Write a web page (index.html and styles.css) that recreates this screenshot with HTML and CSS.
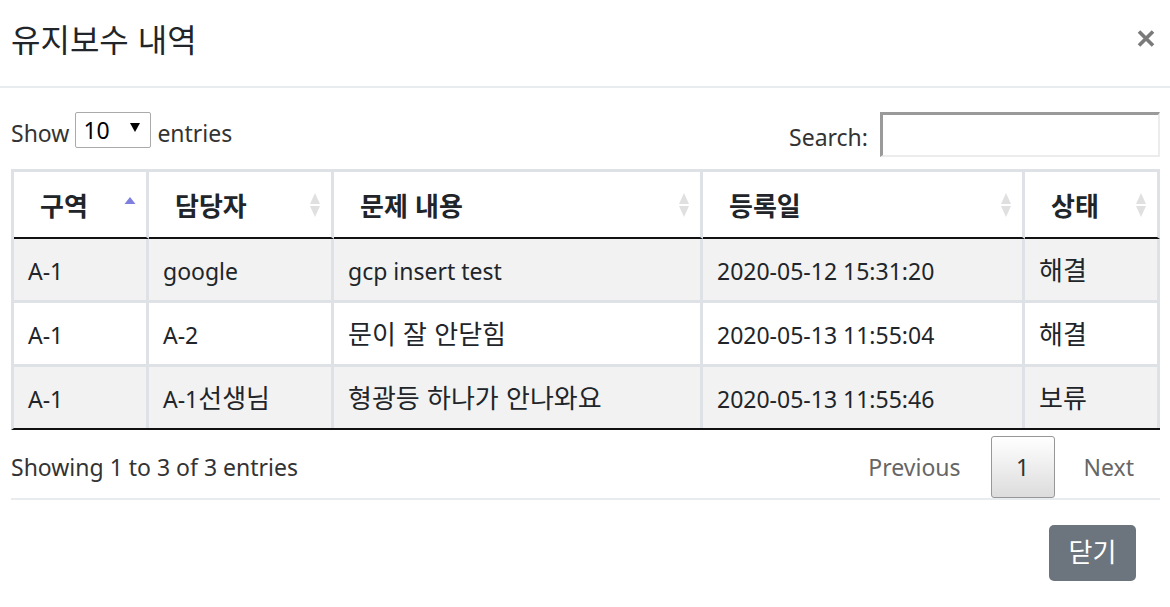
FILE: index.html
```html
<!DOCTYPE html>
<html lang="ko">
<head>
<meta charset="utf-8">
<title>유지보수 내역</title>
<link rel="stylesheet" href="styles.css">
</head>
<body>
<div class="modal">
  <div class="modal-header">
    <h4 class="modal-title">유지보수 내역</h4>
    <button class="close" type="button" aria-label="Close">
      <svg width="18" height="17" viewBox="0 0 18 17"><path d="M2 1.5 L16 15.5 M16 1.5 L2 15.5" stroke="#7a7a7a" stroke-width="3.6" stroke-linecap="butt"/></svg>
    </button>
  </div>
  <div class="modal-body">
    <div class="dt-top">
      <div class="dt-length"><span class="lbl">Show</span><span class="select"><span>10</span><svg width="10" height="9" viewBox="0 0 10 9"><path d="M0 0 H10 L5 9 Z" fill="#000"/></svg></span><span class="lbl">entries</span></div>
      <div class="dt-filter"><span class="lbl">Search:</span><span class="search-input"></span></div>
    </div>
    <table class="dt">
      <colgroup>
        <col class="c1"><col class="c2"><col class="c3"><col class="c4"><col class="c5">
      </colgroup>
      <thead>
        <tr>
          <th><div class="th-in"><span class="ko">구역</span><svg class="sort" width="12" height="24" viewBox="0 0 12 24"><path d="M0.5 11 L6 4 L11.5 11 Z" fill="#7f7fdf"/></svg></div></th>
          <th><div class="th-in"><span class="ko">담당자</span><svg class="sort" width="12" height="24" viewBox="0 0 12 24"><path d="M1 11 L6 0 L11 11 Z M1 13 L11 13 L6 24 Z" fill="#e0e0e0"/></svg></div></th>
          <th><div class="th-in"><span class="ko">문제 내용</span><svg class="sort" width="12" height="24" viewBox="0 0 12 24"><path d="M1 11 L6 0 L11 11 Z M1 13 L11 13 L6 24 Z" fill="#e0e0e0"/></svg></div></th>
          <th><div class="th-in"><span class="ko">등록일</span><svg class="sort" width="12" height="24" viewBox="0 0 12 24"><path d="M1 11 L6 0 L11 11 Z M1 13 L11 13 L6 24 Z" fill="#e0e0e0"/></svg></div></th>
          <th><div class="th-in"><span class="ko">상태</span><svg class="sort" width="12" height="24" viewBox="0 0 12 24"><path d="M1 11 L6 0 L11 11 Z M1 13 L11 13 L6 24 Z" fill="#e0e0e0"/></svg></div></th>
        </tr>
      </thead>
      <tbody>
        <tr class="odd"><td>A-1</td><td>google</td><td>gcp insert test</td><td>2020-05-12 15:31:20</td><td><span class="ko">해결</span></td></tr>
        <tr class="even"><td>A-1</td><td>A-2</td><td><span class="ko">문이 잘 안닫힘</span></td><td>2020-05-13 11:55:04</td><td><span class="ko">해결</span></td></tr>
        <tr class="odd last"><td>A-1</td><td>A-1<span class="ko">선생님</span></td><td><span class="ko">형광등 하나가 안나와요</span></td><td>2020-05-13 11:55:46</td><td><span class="ko">보류</span></td></tr>
      </tbody>
    </table>
    <div class="dt-bottom">
      <div class="dt-info">Showing 1 to 3 of 3 entries</div>
      <div class="dt-paginate">
        <span class="pg">Previous</span>
        <span class="pg current">1</span>
        <span class="pg">Next</span>
      </div>
    </div>
  </div>
  <div class="modal-footer">
    <button class="btn" type="button"><span class="ko">닫기</span></button>
  </div>
</div>
</body>
</html>
```
FILE: styles.css
```css
* { box-sizing: border-box; }
html, body {
  margin: 0;
  padding: 0;
  background: #fff;
}
body {
  font-family: "Noto Sans", "Noto Sans CJK KR", sans-serif;
  font-size: 23px;
  color: #212529;
}
.ko {
  font-family: "Noto Sans CJK KR", sans-serif;
  font-size: 1.13em;
  line-height: 0;
}
.modal {
  width: 1170px;
  height: 607px;
  background: #fff;
}
.modal-header {
  height: 88px;
  padding: 0 15px 10px 11px;
  display: flex;
  align-items: center;
  justify-content: space-between;
  border-bottom: 2px solid #e9ecef;
}
.modal-title {
  margin: 0;
  font-family: "Noto Sans CJK KR", sans-serif;
  font-size: 32px;
  font-weight: 400;
  line-height: 40px;
  color: #212529;
}
.close {
  border: 0;
  background: transparent;
  padding: 0;
  width: 18px;
  height: 17px;
  display: flex;
}
.modal-body {
  padding: 0 10px 0 11px;
}
.dt-top {
  height: 81px;
  padding-top: 24px;
  display: flex;
  justify-content: space-between;
  align-items: flex-start;
  color: #333;
}
.dt-length {
  display: flex;
  align-items: center;
  height: 36px;
  gap: 6px;
  line-height: 30px;
}
.dt-length .lbl { padding-top: 5px; }
.select {
  width: 76px;
  height: 36px;
  border: 1px solid #aaa;
  border-radius: 2px;
  display: flex;
  align-items: center;
  justify-content: space-between;
  padding: 0 10px 0 7px;
  color: #000;
}
.select svg { margin-top: -5px; }
.dt-filter {
  display: flex;
  align-items: center;
  height: 45px;
  gap: 12px;
  line-height: 30px;
}
.dt-filter .lbl { padding-top: 4px; }
.search-input {
  width: 280px;
  height: 45px;
  border-style: solid;
  border-width: 3px 2px 2px 3px;
  border-color: #9a9a9a #ececec #ececec #9a9a9a;
  background: #fff;
}
table.dt {
  width: 1149px;
  table-layout: fixed;
  border-collapse: separate;
  border-spacing: 0;
  border-top: 3px solid #dee2e6;
  border-left: 3px solid #dee2e6;
  border-bottom: 2px solid #111;
}
col.c1 { width: 135px; }
col.c2 { width: 185px; }
col.c3 { width: 369px; }
col.c4 { width: 322px; }
col.c5 { width: 135px; }
.dt th {
  padding: 17px 10px 17px 26px;
  text-align: left;
  font-weight: 700;
  line-height: 31px;
  border-right: 3px solid #dee2e6;
  border-bottom: 2px solid #111;
  background: #fff;
}
.th-in {
  display: flex;
  align-items: center;
  justify-content: space-between;
  height: 31px;
}
.th-in .ko { line-height: 31px; }
.sort { flex: none; }
.dt td {
  padding: 17px 10px 14px 14px;
  line-height: 30px;
  border-right: 3px solid #dee2e6;
  border-bottom: 3px solid #dee2e6;
  white-space: nowrap;
}
.dt tr.last td { border-bottom: 0; }
.dt tr.odd td { background: #f2f2f2; }
.dt tr.even td { background: #fff; }
.dt-bottom {
  height: 70px;
  display: flex;
  justify-content: space-between;
  align-items: flex-start;
  border-bottom: 2px solid #e9ecef;
  color: #333;
}
.dt-info {
  padding-top: 22px;
  line-height: 30px;
}
.dt-paginate {
  display: flex;
  align-items: center;
  margin-top: 6px;
  height: 62px;
  padding-right: 12px;
}
.pg {
  color: #666;
  line-height: 30px;
  padding: 0 14px;
}
.pg.current {
  color: #333;
  width: 64px;
  height: 62px;
  display: flex;
  align-items: center;
  justify-content: center;
  border: 1.5px solid #979797;
  border-radius: 3px;
  background: linear-gradient(to bottom, #ffffff 0%, #dcdcdc 100%);
  margin: 0 15px 0 16px;
  padding: 0;
}
.modal-footer {
  display: flex;
  justify-content: flex-end;
  padding: 25px 34px 0 0;
}
.btn {
  width: 87px;
  height: 56px;
  border: 0;
  border-radius: 5px;
  background: #6c757d;
  color: #fff;
  font-family: "Noto Sans", "Noto Sans CJK KR", sans-serif;
  font-size: 23px;
  line-height: 30px;
  padding: 0;
}
```
